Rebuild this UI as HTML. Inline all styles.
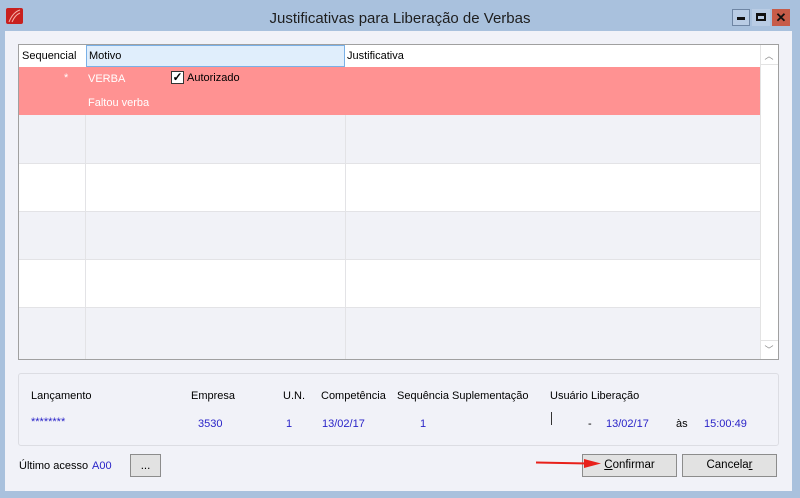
<!DOCTYPE html><html><head><style>
*{margin:0;padding:0;box-sizing:border-box}
body{width:800px;height:498px;background:#a9c1dd;font-family:"Liberation Sans",sans-serif;font-size:11px;color:#000;position:relative;overflow:hidden}
.a{position:absolute}
.client{left:5px;top:31px;width:787px;height:460px;background:#f1f2f8}
.title{left:0;top:10px;width:800px;text-align:center;font-size:15px;color:#1e1e1e}
.btn{border:1px solid #8c8c8c;background:#e2e2e2;text-align:center;line-height:21px;font-size:11.5px}
.blue{color:#2a24c8}
.hl{border-top:1px solid #e3e3e6}
</style></head><body>
<div class="a" style="left:6px;top:8px;width:17px;height:16px;background:#c8201e;border-radius:2px"></div>
<svg class="a" style="left:6px;top:8px" width="17" height="16"><path d="M3 14 Q7 4 14 2 M6 14 Q9 7 14 5" stroke="#f6b0a8" fill="none" stroke-width="1"/></svg>
<div class="a title">Justificativas para Liberação de Verbas</div>
<div class="a" style="left:732px;top:9px;width:18px;height:17px;border:1px solid #6f86a4;background:#b9cce4"></div>
<div class="a" style="left:737px;top:17px;width:8px;height:3px;background:#111"></div>
<div class="a" style="left:752px;top:9px;width:18px;height:17px;background:#b9cce4"></div>
<div class="a" style="left:756px;top:13px;width:10px;height:8px;border:2px solid #111;border-top-width:3px"></div>
<div class="a" style="left:772px;top:9px;width:18px;height:17px;background:#c75b48;color:#111;font-weight:bold;font-size:13px;text-align:center;line-height:17px">✕</div>
<div class="a client"></div>
<!-- grid -->
<div class="a" style="left:18px;top:44px;width:761px;height:316px;border:1px solid #a0a0a0;background:#fff"></div>
<div class="a" style="left:19px;top:45px;width:740px;height:22px;background:#fff"></div>
<div class="a" style="left:22px;top:50px">Sequencial</div>
<div class="a" style="left:86px;top:45px;width:259px;height:22px;background:#e0eefc;border:1px solid #7ab0e6"></div>
<div class="a" style="left:89px;top:50px">Motivo</div>
<div class="a" style="left:347px;top:50px">Justificativa</div>
<div class="a" style="left:19px;top:67px;width:741px;height:48px;background:#ff9292"></div>
<div class="a" style="left:64px;top:72px;color:#fff">*</div>
<div class="a" style="left:88px;top:73px;color:#fff">VERBA</div>
<div class="a" style="left:171px;top:71px;width:13px;height:13px;background:#fff;border:1px solid #333;font-size:12px;line-height:11px;text-align:center;font-weight:bold">✓</div>
<div class="a" style="left:187px;top:72px">Autorizado</div>
<div class="a" style="left:88px;top:97px;color:#fff">Faltou verba</div>
<div class="a" style="left:19px;top:115px;width:741px;height:48px;background:#f1f2f7"></div>
<div class="a hl" style="left:19px;top:163px;width:741px;height:48px;background:#fff"></div>
<div class="a hl" style="left:19px;top:211px;width:741px;height:48px;background:#f1f2f7"></div>
<div class="a hl" style="left:19px;top:259px;width:741px;height:48px;background:#fff"></div>
<div class="a hl" style="left:19px;top:307px;width:741px;height:52px;background:#f1f2f7"></div>
<div class="a" style="left:85px;top:115px;width:1px;height:244px;background:#e3e3e6"></div>
<div class="a" style="left:345px;top:115px;width:1px;height:244px;background:#e3e3e6"></div>
<div class="a" style="left:760px;top:45px;width:18px;height:314px;background:#fff;border-left:1px solid #e3e3e3"></div>
<div class="a" style="left:760px;top:45px;width:18px;height:20px;border-bottom:1px solid #e3e3e3;color:#888;text-align:center;line-height:22px;font-size:9px">︿</div>
<div class="a" style="left:760px;top:340px;width:18px;height:19px;border-top:1px solid #e3e3e3;color:#888;text-align:center;line-height:18px;font-size:9px">﹀</div>
<!-- info group -->
<div class="a" style="left:18px;top:373px;width:761px;height:73px;border:1px solid #dcdde3;border-radius:3px"></div>
<div class="a" style="left:31px;top:390px">Lançamento</div>
<div class="a" style="left:191px;top:390px">Empresa</div>
<div class="a" style="left:283px;top:390px">U.N.</div>
<div class="a" style="left:321px;top:390px">Competência</div>
<div class="a" style="left:397px;top:390px">Sequência Suplementação</div>
<div class="a" style="left:550px;top:390px">Usuário Liberação</div>
<div class="a blue" style="left:31px;top:416px">********</div>
<div class="a blue" style="left:198px;top:418px">3530</div>
<div class="a blue" style="left:286px;top:418px">1</div>
<div class="a blue" style="left:322px;top:418px">13/02/17</div>
<div class="a blue" style="left:420px;top:418px">1</div>
<div class="a" style="left:551px;top:412px;width:1px;height:13px;background:#333"></div>
<div class="a" style="left:588px;top:418px">-</div>
<div class="a blue" style="left:606px;top:418px">13/02/17</div>
<div class="a" style="left:676px;top:418px">às</div>
<div class="a blue" style="left:704px;top:418px">15:00:49</div>
<div class="a" style="left:19px;top:460px">Último acesso</div>
<div class="a blue" style="left:92px;top:460px">A00</div>
<div class="a btn" style="left:130px;top:454px;width:31px;height:23px;line-height:23px">...</div>
<div class="a btn" style="left:582px;top:454px;width:95px;height:23px"><u>C</u>onfirmar</div>
<div class="a btn" style="left:682px;top:454px;width:95px;height:23px">Cancela<u>r</u></div>
<div class="a" style="left:536px;top:462px;width:52px;height:2px;background:#e8201a;transform:rotate(1deg)"></div>
<svg class="a" style="left:584px;top:458px" width="20" height="12"><path d="M0 1 L17 5.5 L0 10 Z" fill="#e8201a"/></svg>
</body></html>
